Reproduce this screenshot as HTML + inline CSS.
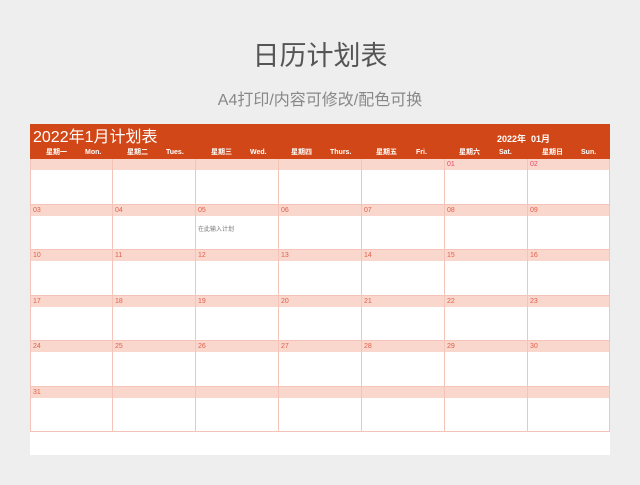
<!DOCTYPE html>
<html><head><meta charset="utf-8"><style>
body{margin:0;width:640px;height:485px;background:#eeeeee;font-family:"Liberation Sans","Noto Sans CJK SC",sans-serif;position:relative;overflow:hidden}
.t{position:absolute;left:0;width:640px;text-align:center}
.card{position:absolute;left:30px;top:124px;width:580px;height:331px;background:#fff}
.hd{position:relative;width:580px;height:35px;background:#d24717;color:#fff}
.row{display:flex;height:45.5px}
.c{position:relative;box-sizing:border-box;width:83px;height:45.5px;border-right:1px solid #f5c4b8;border-bottom:1px solid #f5c4b8}
.c:first-child{border-left:1px solid #f5c4b8}
.c:last-child{width:82px}
.bar{height:11px;background:#fad7cd;font-size:7px;color:#e0604a;padding-left:2px;line-height:11px}
.r0 .bar{color:#e04866}
.w{position:absolute;top:25px;font-size:7px;font-weight:bold;white-space:nowrap;line-height:8px}
.p{position:absolute;left:2px;top:19px;font-size:6px;color:#777}
</style></head><body>
<div class="t" style="top:34px;font-size:27px;color:#555">日历计划表</div>
<div class="t" style="top:86px;font-size:16px;color:#888">A4打印/内容可修改/配色可换</div>
<div class="card">
<div class="hd">
<div style="position:absolute;left:3px;top:4px;font-size:16px;line-height:19px">2022年1月计划表</div>
<div style="position:absolute;left:467px;top:10px;font-size:9px;font-weight:bold;line-height:11px">2022年&nbsp; 01月</div>
<div class="w" style="left:16px">星期一</div><div class="w" style="left:55px">Mon.</div>
<div class="w" style="left:97px">星期二</div><div class="w" style="left:136px">Tues.</div>
<div class="w" style="left:181px">星期三</div><div class="w" style="left:220px">Wed.</div>
<div class="w" style="left:261px">星期四</div><div class="w" style="left:300px">Thurs.</div>
<div class="w" style="left:346px">星期五</div><div class="w" style="left:386px">Fri.</div>
<div class="w" style="left:429px">星期六</div><div class="w" style="left:469px">Sat.</div>
<div class="w" style="left:512px">星期日</div><div class="w" style="left:551px">Sun.</div>
</div>
<div class="row r0"><div class="c"><div class="bar"></div></div><div class="c"><div class="bar"></div></div><div class="c"><div class="bar"></div></div><div class="c"><div class="bar"></div></div><div class="c"><div class="bar"></div></div><div class="c"><div class="bar">01</div></div><div class="c"><div class="bar">02</div></div></div>
<div class="row"><div class="c"><div class="bar">03</div></div><div class="c"><div class="bar">04</div></div><div class="c"><div class="bar">05</div><div class="p">在此输入计划</div></div><div class="c"><div class="bar">06</div></div><div class="c"><div class="bar">07</div></div><div class="c"><div class="bar">08</div></div><div class="c"><div class="bar">09</div></div></div>
<div class="row"><div class="c"><div class="bar">10</div></div><div class="c"><div class="bar">11</div></div><div class="c"><div class="bar">12</div></div><div class="c"><div class="bar">13</div></div><div class="c"><div class="bar">14</div></div><div class="c"><div class="bar">15</div></div><div class="c"><div class="bar">16</div></div></div>
<div class="row"><div class="c"><div class="bar">17</div></div><div class="c"><div class="bar">18</div></div><div class="c"><div class="bar">19</div></div><div class="c"><div class="bar">20</div></div><div class="c"><div class="bar">21</div></div><div class="c"><div class="bar">22</div></div><div class="c"><div class="bar">23</div></div></div>
<div class="row"><div class="c"><div class="bar">24</div></div><div class="c"><div class="bar">25</div></div><div class="c"><div class="bar">26</div></div><div class="c"><div class="bar">27</div></div><div class="c"><div class="bar">28</div></div><div class="c"><div class="bar">29</div></div><div class="c"><div class="bar">30</div></div></div>
<div class="row"><div class="c"><div class="bar">31</div></div><div class="c"><div class="bar"></div></div><div class="c"><div class="bar"></div></div><div class="c"><div class="bar"></div></div><div class="c"><div class="bar"></div></div><div class="c"><div class="bar"></div></div><div class="c"><div class="bar"></div></div></div>
</div>
</body></html>
